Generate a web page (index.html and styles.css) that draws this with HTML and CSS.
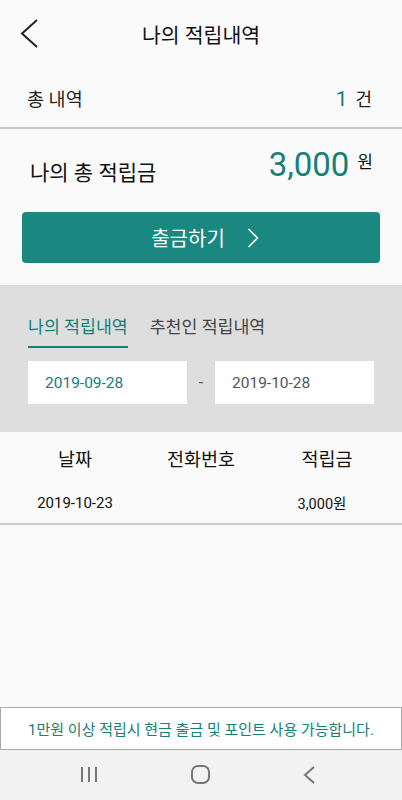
FILE: index.html
```html
<!DOCTYPE html>
<html lang="ko">
<head>
<meta charset="utf-8">
<link rel="stylesheet" href="styles.css">
</head>
<body>
<div class="screen">
  <header class="topbar">
    <svg class="back" width="20" height="32" viewBox="0 0 20 32"><polyline points="17,2 2,15.5 17,29" fill="none" stroke="#222" stroke-width="2"/></svg>
    <h1 class="title">나의 적립내역</h1>
  </header>
  <div class="summary">
    <span class="summary-label">총 내역</span>
    <span class="summary-count"><span class="count-num">1</span><span class="count-unit">건</span></span>
  </div>
  <section class="total">
    <div class="total-row">
      <span class="total-label">나의 총 적립금</span>
      <span class="total-amount"><span class="amount-num">3,000</span><span class="amount-unit">원</span></span>
    </div>
    <button class="withdraw">출금하기<svg class="withdraw-arrow" width="12" height="20" viewBox="0 0 12 20"><polyline points="1.5,1 10.5,10 1.5,19" fill="none" stroke="#fff" stroke-width="1.6"/></svg></button>
  </section>
  <section class="filter">
    <div class="tabs">
      <span class="tab active">나의 적립내역</span>
      <span class="tab">추천인 적립내역</span>
    </div>
    <div class="dates">
      <div class="date from">2019-09-28</div>
      <div class="dash">-</div>
      <div class="date to">2019-10-28</div>
    </div>
  </section>
  <div class="table">
    <div class="thead">
      <span>날짜</span><span>전화번호</span><span>적립금</span>
    </div>
    <div class="trow">
      <span>2019-10-23</span><span></span><span class="amt">3,000원</span>
    </div>
  </div>
  <div class="spacer"></div>
  <div class="notice">1만원 이상 적립시 현금 출금 및 포인트 사용 가능합니다.</div>
  <nav class="navbar">
    <svg width="20" height="20" viewBox="0 0 20 20"><line x1="3" y1="2" x2="3" y2="17" stroke="#777" stroke-width="2"/><line x1="10" y1="2" x2="10" y2="17" stroke="#777" stroke-width="2"/><line x1="17" y1="2" x2="17" y2="17" stroke="#777" stroke-width="2"/></svg>
    <svg width="20" height="20" viewBox="0 0 20 20"><rect x="2" y="1" width="17" height="17" rx="6" fill="none" stroke="#777" stroke-width="2"/></svg>
    <svg width="20" height="20" viewBox="0 0 20 20"><polyline points="14,2 5,10 14,18" fill="none" stroke="#777" stroke-width="2"/></svg>
  </nav>
</div>
</body>
</html>
```
FILE: styles.css
```css
* { box-sizing: border-box; }
html, body { margin: 0; padding: 0; }
body {
  background: #fafafa;
  font-family: Roboto, "Noto Sans CJK KR", sans-serif;
  color: #111;
}
.screen {
  width: 402px;
  height: 800px;
  display: flex;
  flex-direction: column;
  overflow: hidden;
}
.topbar {
  height: 70px;
  display: flex;
  align-items: center;
  justify-content: center;
  position: relative;
}
.back {
  position: absolute;
  left: 20px;
  top: 18px;
}
.title {
  margin: 0 0 3px 0;
  font-size: 20.5px;
  font-weight: 400;
  color: #111;
}
.summary {
  height: 59px;
  padding: 0 30px 2px 27px;
  display: flex;
  align-items: center;
  justify-content: space-between;
  border-bottom: 2px solid #c9c9c9;
}
.summary-label { font-size: 18.5px; color: #222; }
.summary-count { display: flex; align-items: baseline; color: #222; }
.count-num { font-size: 21px; color: #168077; margin-right: 8px; }
.count-unit { font-size: 18px; }
.total {
  padding: 16px 22px 22px 22px;
  display: flex;
  flex-direction: column;
}
.total-row {
  height: 50px;
  display: flex;
  align-items: center;
  justify-content: space-between;
  padding: 0 7px 0 8px;
}
.total-label { font-size: 21px; color: #111; margin-top: 2px; }
.total-amount {
  display: flex;
  align-items: flex-start;
  margin-bottom: 10px;
}
.amount-num {
  font-size: 33px;
  line-height: 38px;
  color: #168077;
}
.amount-unit {
  font-size: 17px;
  line-height: 17px;
  margin-left: 8px;
  margin-top: 8px;
  color: #111;
}
.withdraw {
  margin-top: 17px;
  height: 51px;
  border: none;
  border-radius: 4px;
  background: #1a8780;
  color: #fff;
  font-family: Roboto, "Noto Sans CJK KR", sans-serif;
  font-size: 20px;
  display: flex;
  align-items: center;
  justify-content: center;
  gap: 22px;
  padding: 0 0 0 8px;
}
.filter {
  background: #dedede;
  padding: 30px 28px 28px 28px;
  display: flex;
  flex-direction: column;
}
.tabs {
  display: flex;
  gap: 22px;
}
.tab {
  font-size: 17.3px;
  line-height: 24px;
  padding-bottom: 7px;
  color: #444;
  border-bottom: 2px solid transparent;
}
.tab.active {
  color: #168077;
  border-bottom-color: #168077;
}
.dates {
  margin-top: 13px;
  display: grid;
  grid-template-columns: 1fr 28px 1fr;
  height: 43px;
}
.date {
  background: #fff;
  display: flex;
  align-items: center;
  padding-left: 17px;
  font-size: 15.5px;
}
.date.from { color: #168077; }
.date.to { color: #555; }
.dash {
  display: flex;
  align-items: center;
  justify-content: center;
  color: #555;
  font-size: 16px;
}
.table { padding: 0; }
.thead, .trow {
  display: grid;
  grid-template-columns: 1fr 1fr 1fr;
  padding: 0 12px;
  text-align: center;
  align-items: center;
}
.thead {
  height: 52px;
  font-size: 18.5px;
  color: #111;
}
.trow {
  height: 41px;
  padding-bottom: 2px;
  font-size: 15px;
  color: #111;
  border-bottom: 2px solid #c9c9c9;
}
.trow .amt { font-size: 14.5px; padding-right: 10px; }
.spacer { flex: 1; }
.notice {
  height: 43px;
  border: 1px solid #aaa;
  background: #fff;
  display: flex;
  align-items: center;
  justify-content: center;
  font-size: 15px;
  color: #168077;
}
.navbar {
  height: 50px;
  background: #f2f2f2;
  display: flex;
  align-items: center;
  justify-content: space-between;
  padding: 0 82px 0 79px;
}
```
